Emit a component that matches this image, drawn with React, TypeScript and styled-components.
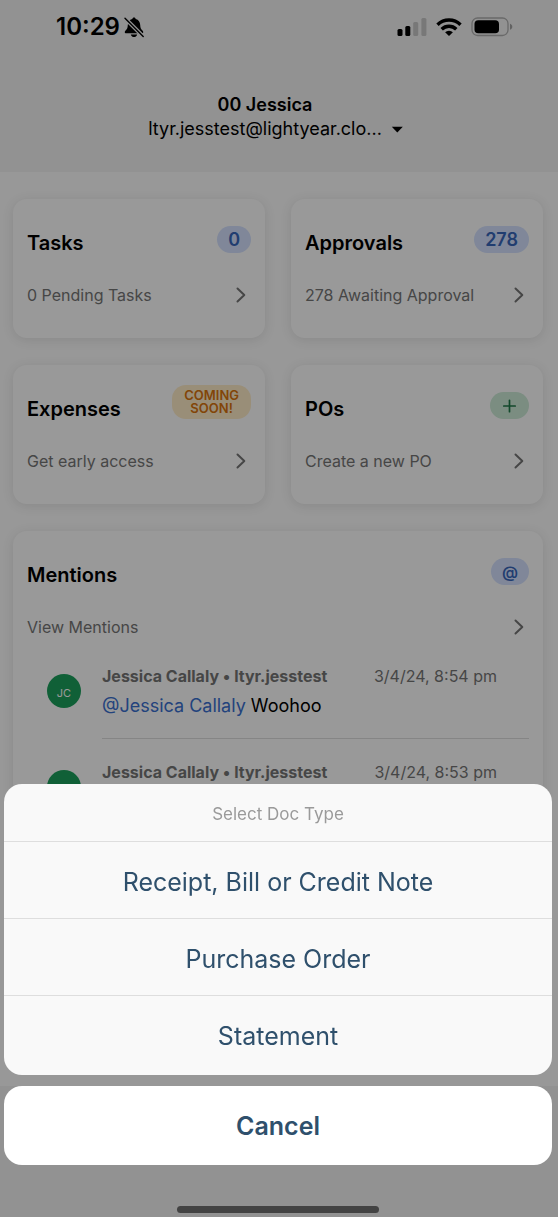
import React from "react";
import styled, { createGlobalStyle } from "styled-components";

const GlobalStyle = createGlobalStyle`
  *, *::before, *::after { box-sizing: border-box; }
  body {
    margin: 0;
    background: #fdfdfd;
    font-family: Inter, "Liberation Sans", sans-serif;
    color: #000;
  }
  button {
    font: inherit;
    color: inherit;
    background: none;
    border: 0;
    padding: 0;
    cursor: pointer;
  }
  h2, p, ul { margin: 0; padding: 0; }
`;

const Screen = styled.div`
  display: flex;
  flex-direction: column;
  height: 100vh;
  overflow: hidden;
`;

const Header = styled.header`
  flex: none;
  background: #f3f3f3;
  padding-bottom: 31px;
`;

const StatusBar = styled.div`
  display: flex;
  align-items: center;
  justify-content: space-between;
  height: 54px;
  padding: 0 45px 0 56px;
`;

const StatusGroup = styled.div<{ $gap: number }>`
  display: flex;
  align-items: center;
  gap: ${(p) => p.$gap}px;
`;

const Clock = styled.time`
  font-size: 24px;
  line-height: 28px;
  font-weight: 600;
`;

const Account = styled.button`
  display: flex;
  align-items: flex-end;
  gap: 4px;
  margin: 39px auto 0;
  font-size: 18px;
  line-height: 24px;
  text-align: center;
`;

const AccountName = styled.span`
  display: block;
  font-weight: 600;
`;

const AccountMail = styled.span`
  display: block;
`;

const Content = styled.main`
  flex: 1;
  min-height: 0;
  display: flex;
  flex-direction: column;
  gap: 27px;
  padding: 27px 15px 0 13px;
  overflow: hidden;
`;

const Tiles = styled.div`
  display: grid;
  grid-template-columns: 1fr 1fr;
  gap: 27px 26px;
`;

const Card = styled.section`
  background: #fff;
  border-radius: 14px;
  box-shadow: 0 2px 12px rgba(0, 0, 0, 0.1);
  padding: 20px 14px 33px;
`;

const CardHead = styled.div`
  display: flex;
  align-items: flex-end;
  justify-content: space-between;
  height: 37px;
`;

const CardTitle = styled.h2`
  font-size: 20px;
  line-height: 26px;
  font-weight: 600;
`;

const tones = {
  blue: { back: "#d5e2ff", ink: "#3867bb" },
  green: { back: "#cdebd7", ink: "#1f7a48" },
  amber: { back: "#ffedc8", ink: "#d9730d" },
};

const Badge = styled.span<{ $tone: keyof typeof tones; $size: number }>`
  display: flex;
  align-items: center;
  justify-content: center;
  margin-bottom: 3px;
  padding: ${(p) => (p.$size < 14 ? "4px 12px" : "0 11px")};
  min-height: 27px;
  border-radius: 14px;
  background: ${(p) => tones[p.$tone].back};
  color: ${(p) => tones[p.$tone].ink};
  font-size: ${(p) => p.$size}px;
  line-height: ${(p) => (p.$size < 14 ? 13 : 26)}px;
  font-weight: 600;
  text-align: center;
`;

const CardLink = styled.button`
  display: flex;
  align-items: center;
  justify-content: space-between;
  width: 100%;
  margin-top: 29px;
  padding-right: 4px;
  font-size: 16px;
  line-height: 20px;
  color: #767676;
  text-align: left;
`;

const MentionList = styled.ul`
  list-style: none;
  margin-top: 6px;
  padding-left: 20px;
`;

const Mention = styled.li`
  display: flex;
  gap: 21px;
`;

const Avatar = styled.span`
  flex: none;
  display: flex;
  align-items: center;
  justify-content: center;
  width: 34px;
  height: 34px;
  margin-top: 31px;
  padding-top: 3px;
  border-radius: 50%;
  background: #1ca05d;
  color: #fff;
  font-size: 11px;
`;

const MentionBody = styled.div`
  flex: 1;
  min-height: 96px;
  padding: 23px 0 20px;
  border-bottom: 1px solid #dedede;
`;

const MentionMeta = styled.div`
  display: flex;
  justify-content: space-between;
  padding-right: 32px;
  font-size: 16px;
  line-height: 20px;
  color: #767676;
`;

const Author = styled.span`
  font-weight: 700;
`;

const Message = styled.p`
  margin-top: 8px;
  font-size: 18px;
  line-height: 24px;
`;

const Tag = styled.a`
  color: #3a70d0;
  text-decoration: none;
`;

const TabBar = styled.div`
  flex: none;
  height: 131px;
  background: #f3f3f3;
`;

const Backdrop = styled.div`
  position: fixed;
  inset: 0;
  display: flex;
  flex-direction: column;
  justify-content: flex-end;
  padding: 0 6px 4px 4px;
  background: rgba(0, 0, 0, 0.4);
`;

const Sheet = styled.div`
  display: flex;
  flex-direction: column;
  margin-bottom: 11px;
  padding-bottom: 3px;
  border-radius: 18px;
  background: #f9f9f9;
  overflow: hidden;
`;

const SheetTitle = styled.h2`
  padding: 18px 0 15px;
  font-size: 17px;
  line-height: 24px;
  font-weight: 400;
  color: #9a9a9a;
  text-align: center;
`;

const SheetOption = styled.button`
  height: 77px;
  padding-top: 4px;
  border-top: 1px solid #dedede;
  font-size: 25px;
  line-height: 32px;
  color: #2f506c;
`;

const CancelButton = styled.button`
  height: 79px;
  border-radius: 18px;
  background: #fff;
  font-size: 25px;
  line-height: 32px;
  font-weight: 600;
  color: #2f506c;
`;

const HomeIndicator = styled.div`
  align-self: center;
  width: 37%;
  height: 7px;
  margin-top: 41px;
  border-radius: 4px;
  background: #434343;
`;

const BellOff = () => (
  <svg width="20" height="21" viewBox="0 0 20 21" aria-hidden="true">
    <path
      d="M10 0.6c-.9 0-1.6.6-1.7 1.5C5.400 2.900 3.900 5.200 3.800 8c-.1 3-.9 4.300-2.200 5.600C.9 14.300.8 14.700.8 15.200c0 .6.5 1 1.200 1h16c.7 0 1.200-.4 1.200-1 0-.5-.1-.9-.8-1.600-1.300-1.300-2.100-2.600-2.200-5.600-.1-2.800-1.600-5.100-4.500-5.900C11.600 1.200 10.900.6 10 .6z"
    />
    <path d="M6.800 17.400h6.400c-.3 1.500-1.600 2.600-3.200 2.600s-2.900-1.100-3.200-2.600z" />
    <path d="M1 1.200 19.400 19.600" stroke="#f3f3f3" strokeWidth="3.800" />
    <path d="M1 1.200 19.200 19.400" stroke="#000" strokeWidth="1.400" strokeLinecap="round" />
  </svg>
);

const Signal = () => (
  <svg width="30" height="18" viewBox="0 0 30 18" aria-hidden="true">
    <rect x="0.500" y="11" width="5" height="7" rx="1.500" />
    <rect x="8.300" y="8" width="5" height="10" rx="1.500" />
    <rect x="16.200" y="4" width="5" height="14" rx="1.500" fill="#c8c8c8" />
    <rect x="24.400" y="0" width="5" height="18" rx="1.500" fill="#c8c8c8" />
  </svg>
);

const Wifi = () => (
  <svg width="26" height="18" viewBox="0 0 26 18" aria-hidden="true">
    <g fill="none" stroke="#000" strokeWidth="3.400">
      <path d="M1.500 6.700a16.400 16.400 0 0 1 23 0" />
      <path d="M5.700 11.200a10.400 10.400 0 0 1 14.600 0" />
    </g>
    <path d="M13 18l-3.900-3.700a5.600 5.600 0 0 1 7.800 0z" />
  </svg>
);

const Battery = () => (
  <svg width="42" height="20" viewBox="0 0 42 20" aria-hidden="true">
    <rect x="1" y="1" width="36" height="17.500" rx="5.500" fill="none" stroke="#b0b0b0" strokeWidth="1.300" />
    <rect x="3.500" y="3.300" width="24.500" height="13" rx="3.800" />
    <path d="M39 6.800c1.500.5 2.300 1.600 2.300 3s-.8 2.500-2.300 3z" fill="#a3a3a3" />
  </svg>
);

const Caret = () => (
  <svg width="24" height="24" viewBox="0 0 24 24" aria-hidden="true">
    <path d="M5.800 9.800h11L11.300 15.500z" />
  </svg>
);

const Chevron = () => (
  <svg width="12" height="16" viewBox="0 0 12 16" fill="none" stroke="#767676" strokeWidth="2" strokeLinecap="round" strokeLinejoin="round" aria-hidden="true">
    <path d="M2.500 1.500 9.300 8l-6.800 6.500" />
  </svg>
);

const Plus = () => (
  <svg width="17" height="14" viewBox="0 0 17 14" fill="none" stroke="#1f7a48" strokeWidth="1.700" strokeLinecap="round" aria-label="Add">
    <path d="M8.500 1.300v11.400M2.800 7h11.400" />
  </svg>
);

type TileProps = {
  title: string;
  link: string;
  tone: keyof typeof tones;
  badge: React.ReactNode;
  badgeSize?: number;
  children?: React.ReactNode;
};

const Tile = ({ title, link, tone, badge, badgeSize = 18, children }: TileProps) => (
  <Card>
    <CardHead>
      <CardTitle>{title}</CardTitle>
      <Badge $tone={tone} $size={badgeSize}>{badge}</Badge>
    </CardHead>
    <CardLink type="button">
      {link}
      <Chevron />
    </CardLink>
    {children}
  </Card>
);

const mentions = [
  { author: "Jessica Callaly • ltyr.jesstest", time: "3/4/24, 8:54 pm", tag: "@Jessica Callaly", text: "Woohoo" },
  { author: "Jessica Callaly • ltyr.jesstest", time: "3/4/24, 8:53 pm" },
];

const docTypes = ["Receipt, Bill or Credit Note", "Purchase Order", "Statement"];

export default function App() {
  return (
    <>
      <GlobalStyle />
      <Screen>
        <Header>
          <StatusBar>
            <StatusGroup $gap={4}>
              <Clock>10:29</Clock>
              <BellOff />
            </StatusGroup>
            <StatusGroup $gap={9}>
              <Signal />
              <Wifi />
              <Battery />
            </StatusGroup>
          </StatusBar>
          <Account type="button">
            <span>
              <AccountName>00 Jessica</AccountName>
              <AccountMail>ltyr.jesstest@lightyear.clo...</AccountMail>
            </span>
            <Caret />
          </Account>
        </Header>
        <Content>
          <Tiles>
            <Tile title="Tasks" link="0 Pending Tasks" tone="blue" badge="0" />
            <Tile title="Approvals" link="278 Awaiting Approval" tone="blue" badge="278" />
            <Tile title="Expenses" link="Get early access" tone="amber" badge={<>COMING<br />SOON!</>} badgeSize={13} />
            <Tile title="POs" link="Create a new PO" tone="green" badge={<Plus />} />
          </Tiles>
          <Tile title="Mentions" link="View Mentions" tone="blue" badge="@" badgeSize={16}>
            <MentionList>
              {mentions.map((m) => (
                <Mention key={m.time}>
                  <Avatar>JC</Avatar>
                  <MentionBody>
                    <MentionMeta>
                      <Author>{m.author}</Author>
                      <span>{m.time}</span>
                    </MentionMeta>
                    {m.tag && (
                      <Message>
                        <Tag href="#">{m.tag}</Tag> {m.text}
                      </Message>
                    )}
                  </MentionBody>
                </Mention>
              ))}
            </MentionList>
          </Tile>
        </Content>
        <TabBar />
      </Screen>
      <Backdrop>
        <Sheet role="dialog" aria-labelledby="doc-type-title">
          <SheetTitle id="doc-type-title">Select Doc Type</SheetTitle>
          {docTypes.map((name) => (
            <SheetOption key={name} type="button">{name}</SheetOption>
          ))}
        </Sheet>
        <CancelButton type="button">Cancel</CancelButton>
        <HomeIndicator />
      </Backdrop>
    </>
  );
}
